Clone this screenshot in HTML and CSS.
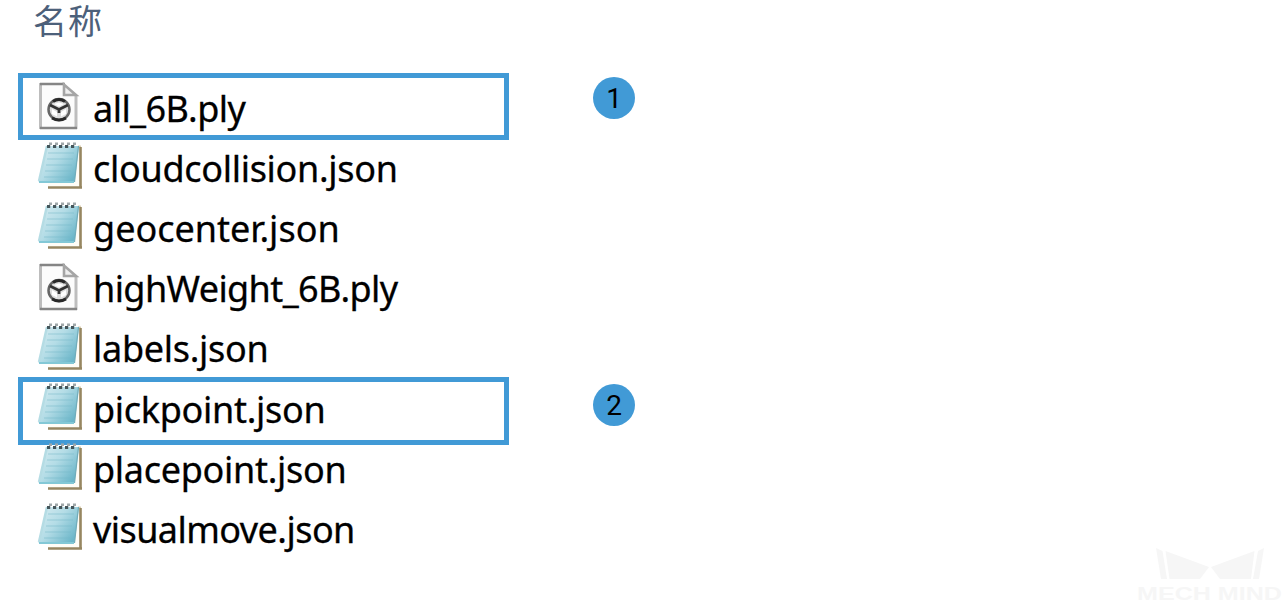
FILE: index.html
```html
<!DOCTYPE html>
<html lang="zh">

<head>
    <meta charset="utf-8">
    <title>名称</title>
    <link rel="stylesheet" href="styles.css">
</head>

<body>
    <!-- file icons -->
    <svg class="sprite" width="0" height="0">
        <defs>
            <linearGradient id="paper" x1="0" y1="0" x2="1" y2="0.7">
                <stop offset="0" stop-color="#d9edf2" />
                <stop offset="0.5" stop-color="#b3dce6" />
                <stop offset="1" stop-color="#6bb6c9" />
            </linearGradient>
        </defs>
        <symbol id="json" viewBox="0 0 48 50">
            <path d="M40 6h5v40H11v-4h25z" fill="#fffdf6" />
            <path d="M41 5.500h3" stroke="#ddd0b4" stroke-width="2" />
            <path d="M43.500 6v40M11 46.500h34" fill="none" stroke="#968661" stroke-width="2.600" />
            <path d="M10 5H42L37.500 41H1.500z" fill="url(#paper)" />
            <path d="M10 5 2 40" stroke="#b5dce4" stroke-width="2.500" />
            <path d="M2 41H37" stroke="#83c8d6" stroke-width="2" />
            <path d="M11 12H37M10 18H36M9 24H35M8 30H34M7 36H33" stroke="#76b9c9" stroke-width="1.500" opacity="0.350" />
            <path d="M41.500 5 37.500 41" stroke="#71acba" stroke-width="1.200" />
            <path d="M10 5.500H40" stroke="#45565b" stroke-width="3" stroke-dasharray="3.200 2.800" />
            <path d="M12 2.800H42" stroke="#a0a8aa" stroke-width="2.600" stroke-dasharray="3 3" />
        </symbol>
        <symbol id="ply" viewBox="0 0 48 50">
            <path d="M4 3h22l13 11v33H4z" fill="#fcfcfc" />
            <path d="M3.500 2v46" stroke="#bdbdbd" stroke-width="3" />
            <path d="M39 14v34" stroke="#bebebe" stroke-width="3" />
            <path d="M3 3h25M3 47h37" stroke="#858585" stroke-width="2.400" />
            <path d="M27 3.500v10.500h12z" fill="#eee" stroke="#a5a5a5" stroke-width="2.600" />
            <circle cx="22" cy="28.500" r="10.500" fill="#ddd" stroke="#666" stroke-width="2.500" />
            <path d="M16 20.500q6-4 12 0M15 37q7 4 14 0" fill="none" stroke="#292929" stroke-width="3" />
            <path d="M13 24l9 4.500 9-4.500M22 28v4" fill="none" stroke="#333" stroke-width="2.800" />
            <path d="M15 28l5 3v4.500l-5-2.500zM29 28l-5 3v4.500l5-2.500zM17 23l5-1.500 5 1.500-5 2.500z" fill="#fff" />
        </symbol>
    </svg>

    <div class="explorer">
        <div class="header">名称</div>
        <ul class="files">
            <li class="file">
                <svg class="icon"><use href="#ply" /></svg>
                <span class="name all">all_6B.ply</span>
                <div class="mark"></div>
                <div class="badge">1</div>
            </li>
            <li class="file">
                <svg class="icon"><use href="#json" /></svg>
                <span class="name cloud">cloudcollision.json</span>
            </li>
            <li class="file">
                <svg class="icon"><use href="#json" /></svg>
                <span class="name">geocenter.json</span>
            </li>
            <li class="file">
                <svg class="icon"><use href="#ply" /></svg>
                <span class="name high">highWeight_6B.ply</span>
            </li>
            <li class="file">
                <svg class="icon"><use href="#json" /></svg>
                <span class="name labels">labels.json</span>
            </li>
            <li class="file">
                <svg class="icon"><use href="#json" /></svg>
                <span class="name pick">pickpoint.json</span>
                <div class="mark second"></div>
                <div class="badge second">2</div>
            </li>
            <li class="file">
                <svg class="icon"><use href="#json" /></svg>
                <span class="name place">placepoint.json</span>
            </li>
            <li class="file">
                <svg class="icon"><use href="#json" /></svg>
                <span class="name visual">visualmove.json</span>
            </li>
        </ul>
    </div>

    <svg class="watermark" viewBox="0 0 160 70">
        <path d="M31 13l6.500 3 4.500 28h-6zM40.500 16L84 32l-9 12H44.500zM86 32l43.500-16L126 44H95zM133 16l6-3-5 31h-6z" />
        <text x="12" y="65" textLength="145" lengthAdjust="spacingAndGlyphs">MECH MIND</text>
    </svg>
</body>

</html>
```

FILE: styles.css
```css
body {
    margin: 0;
    height: 605px;
    overflow: hidden;
    background-color: #fff;
    color: #000;
    font-family: "Noto Sans", "Noto Sans CJK SC", sans-serif;
}

.sprite {
    position: absolute;
}

.header {
    height: 76px;
    padding-left: 33px;
    box-sizing: border-box;
    color: #4c607a;
    font-family: "Noto Sans CJK SC", sans-serif;
    font-size: 34px;
    letter-spacing: 1px;
    line-height: 40px;
}

.files {
    margin: 0;
    padding: 0;
    list-style: none;
}

.file {
    position: relative;
    display: flex;
    align-items: center;
    height: 60.2px;
    padding-left: 37px;
}

.icon {
    width: 48px;
    height: 50px;
    flex: none;
}

.name {
    margin-left: 8px;
    padding-top: 5px;
    font-size: 36px;
    line-height: 60px;
    white-space: nowrap;
    -webkit-text-stroke: 0.3px #000;
}

.all,
.visual {
    letter-spacing: -0.55px;
}

.cloud,
.labels,
.pick,
.place {
    letter-spacing: -0.3px;
}

.high {
    letter-spacing: -0.6px;
}

/* frames and numbers over the list */

.mark {
    position: absolute;
    top: -3px;
    left: 18px;
    width: 491px;
    height: 67px;
    box-sizing: border-box;
    border: 5px solid #419ad6;
}

.mark.second {
    top: 0;
    height: 68px;
}

.badge {
    position: absolute;
    top: 1px;
    left: 593px;
    width: 42px;
    height: 42px;
    border-radius: 50%;
    background-color: #419ad6;
    font-family: Roboto, sans-serif;
    font-size: 28px;
    line-height: 43px;
    text-align: center;
}

.badge.second {
    top: 7px;
}

.watermark {
    position: absolute;
    right: 0;
    bottom: 0;
    width: 160px;
    height: 70px;
    fill: #f6f6f6;
    font-family: "Liberation Sans", sans-serif;
    font-size: 18px;
    font-weight: bold;
}
```
